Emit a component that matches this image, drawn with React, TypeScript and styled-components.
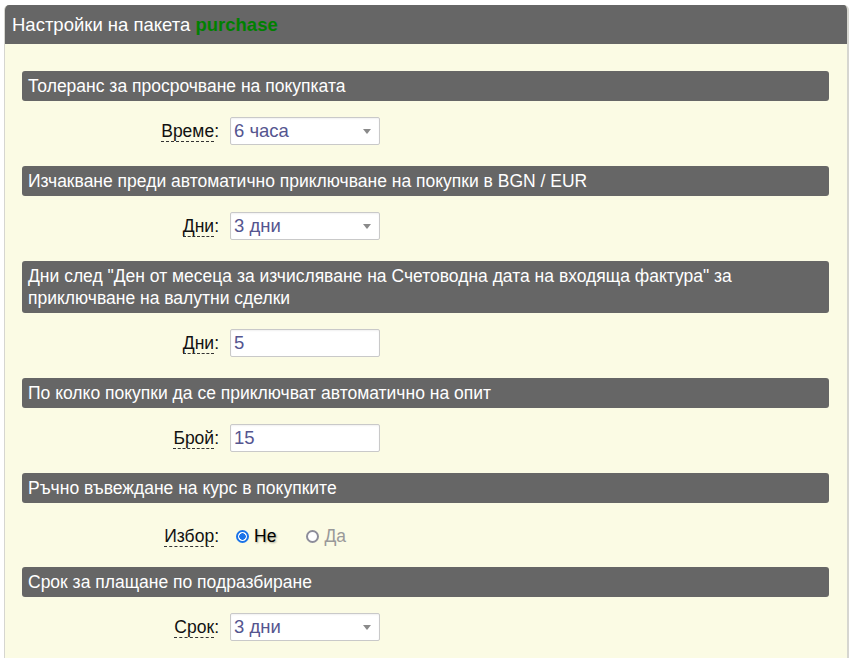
import React from "react";
import styled, { createGlobalStyle } from "styled-components";

const Global = createGlobalStyle`
  html, body { margin: 0; padding: 0; background: #ffffff; }
  body { font-family: "Liberation Sans", Arial, sans-serif; }
`;

const Panel = styled.div`
  margin: 5px 3px 0 4px;
  border-radius: 5px 5px 0 0;
  border-left: 1px solid #d6d6d0;
  border-right: 2px solid #d6d6d0;
  background: #fbfbe4;
  overflow: hidden;
  height: 653px;
  box-sizing: border-box;
`;

const PanelHeader = styled.div`
  height: 39px;
  background: #666666;
  color: #ffffff;
  font-size: 18.5px;
  line-height: 39px;
  padding-left: 8px;
  margin-left: -1px;
`;

const PackageName = styled.b`
  color: #008000;
`;

const Body = styled.div`
  padding: 27px 18px 0 17px;
`;

const Section = styled.section`
  display: flex;
  flex-direction: column;
`;

const SectionTitle = styled.div`
  background: #666666;
  color: #ffffff;
  border-radius: 3px;
  font-size: 17.5px;
  line-height: 22px;
  padding: 4px 6px;
`;

const Row = styled.div<{ $radio?: boolean }>`
  display: grid;
  grid-template-columns: 197px 150px;
  column-gap: 11px;
  align-items: center;
  padding: ${(p) => (p.$radio ? "23px 0 21px" : "16px 0 21px")};
`;

const Label = styled.div`
  text-align: right;
  font-size: 17.5px;
  line-height: 20px;
  color: #111;
`;

const Abbr = styled.span`
  border-bottom: 1px dashed #333;
`;

const Field = styled.div<{ $select?: boolean }>`
  position: relative;
  box-sizing: border-box;
  height: 28px;
  background: #ffffff;
  border: 1px solid #c9c9c9;
  border-radius: 2px;
  box-shadow: inset 0 1px 2px rgba(0, 0, 0, 0.06);
  color: #55558f;
  font-size: 18.5px;
  line-height: 26px;
  padding-left: 3px;
`;

const Arrow = styled.span`
  position: absolute;
  right: 8px;
  top: 11px;
  width: 0;
  height: 0;
  border-left: 4px solid transparent;
  border-right: 4px solid transparent;
  border-top: 5px solid #8a8a8a;
`;

const RadioGroup = styled.div`
  display: flex;
  align-items: center;
  gap: 30px;
  padding-left: 6px;
  white-space: nowrap;
`;

const RadioOption = styled.span<{ $checked?: boolean }>`
  display: inline-flex;
  align-items: center;
  gap: 5px;
  font-size: 17.5px;
  line-height: 20px;
  color: ${(p) => (p.$checked ? "#000" : "#999")};
  text-shadow: ${(p) => (p.$checked ? "1px 1px 2px rgba(0,0,0,0.35)" : "none")};
`;

const RadioDot = styled.span<{ $checked?: boolean }>`
  box-sizing: border-box;
  width: 13px;
  height: 13px;
  border-radius: 50%;
  border: 2px solid ${(p) => (p.$checked ? "#1a73e8" : "#8d8d9a")};
  background: ${(p) =>
    p.$checked ? "radial-gradient(circle, #1a73e8 0 3px, #fff 3.5px)" : "#fff"};
`;

type Item = {
  title: string;
  label: string;
  kind: "select" | "input" | "radio";
  value?: string;
};

const items: Item[] = [
  { title: "Толеранс за просрочване на покупката", label: "Време", kind: "select", value: "6 часа" },
  { title: "Изчакване преди автоматично приключване на покупки в BGN / EUR", label: "Дни", kind: "select", value: "3 дни" },
  {
    title:
      'Дни след "Ден от месеца за изчисляване на Счетоводна дата на входяща фактура" за приключване на валутни сделки',
    label: "Дни",
    kind: "input",
    value: "5",
  },
  { title: "По колко покупки да се приключват автоматично на опит", label: "Брой", kind: "input", value: "15" },
  { title: "Ръчно въвеждане на курс в покупките", label: "Избор", kind: "radio" },
  { title: "Срок за плащане по подразбиране", label: "Срок", kind: "select", value: "3 дни" },
];

export default function App() {
  return (
    <>
      <Global />
      <Panel>
        <PanelHeader>
          Настройки на пакета <PackageName>purchase</PackageName>
        </PanelHeader>
        <Body>
          {items.map((it, i) => (
            <Section key={i}>
              <SectionTitle>{it.title}</SectionTitle>
              <Row $radio={it.kind === "radio"}>
                <Label>
                  <Abbr>{it.label}</Abbr>:
                </Label>
                {it.kind === "radio" ? (
                  <RadioGroup>
                    <RadioOption $checked>
                      <RadioDot $checked />
                      Не
                    </RadioOption>
                    <RadioOption>
                      <RadioDot />
                      Да
                    </RadioOption>
                  </RadioGroup>
                ) : (
                  <Field $select={it.kind === "select"}>
                    {it.value}
                    {it.kind === "select" && <Arrow />}
                  </Field>
                )}
              </Row>
            </Section>
          ))}
        </Body>
      </Panel>
    </>
  );
}
